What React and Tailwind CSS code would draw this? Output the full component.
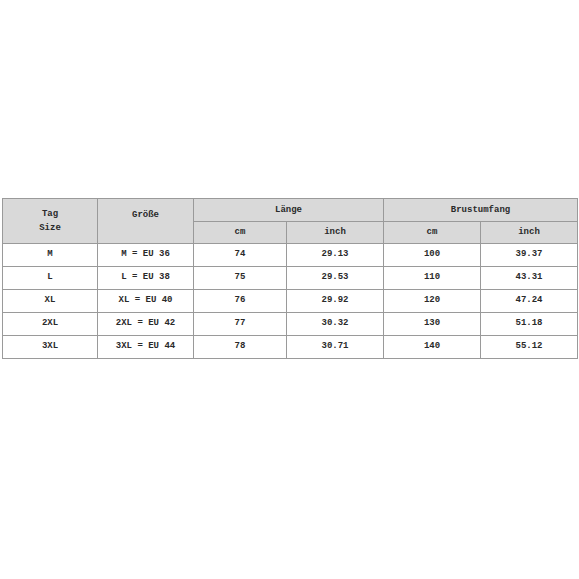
import React from "react";

const rows = [
  ["M", "M = EU 36", "74", "29.13", "100", "39.37"],
  ["L", "L = EU 38", "75", "29.53", "110", "43.31"],
  ["XL", "XL = EU 40", "76", "29.92", "120", "47.24"],
  ["2XL", "2XL = EU 42", "77", "30.32", "130", "51.18"],
  ["3XL", "3XL = EU 44", "78", "30.71", "140", "55.12"],
];

export default function App() {
  const cell = "border border-[#9a9a9a] text-center align-middle p-0";
  const head = `${cell} bg-[#d9d9d9]`;
  return (
    <div className="w-[579px] h-[579px] bg-white pt-[198px]">
      <table
        className="ml-[2px] w-[575px] border-collapse table-fixed text-[9px] font-bold text-[#2a2a2a]"
        style={{ fontFamily: '"Liberation Mono", monospace' }}
      >
        <colgroup>
          <col className="w-[95px]" />
          <col className="w-[96px]" />
          <col className="w-[93px]" />
          <col className="w-[97px]" />
          <col className="w-[97px]" />
          <col className="w-[97px]" />
        </colgroup>
        <thead>
          <tr className="h-[23px]">
            <th rowSpan={2} className={`${head} leading-[14px] font-bold`}>
              <div>Tag</div>
              <div>Size</div>
            </th>
            <th rowSpan={2} className={`${head} font-bold`}>
              <div className="pb-[11px]">Größe</div>
            </th>
            <th colSpan={2} className={`${head} font-bold`}>
              <div className="pt-[2px]">Länge</div>
            </th>
            <th colSpan={2} className={`${head} font-bold`}>
              <div className="pt-[2px]">Brustumfang</div>
            </th>
          </tr>
          <tr className="h-[22px]">
            <th className={`${head} font-bold`}>cm</th>
            <th className={`${head} font-bold`}>inch</th>
            <th className={`${head} font-bold`}>cm</th>
            <th className={`${head} font-bold`}>inch</th>
          </tr>
        </thead>
        <tbody>
          {rows.map((r) => (
            <tr key={r[0]} className="h-[23px]">
              {r.map((v, i) => (
                <td key={i} className={cell}>
                  <span className="whitespace-pre">{v}</span>
                </td>
              ))}
            </tr>
          ))}
        </tbody>
      </table>
    </div>
  );
}
